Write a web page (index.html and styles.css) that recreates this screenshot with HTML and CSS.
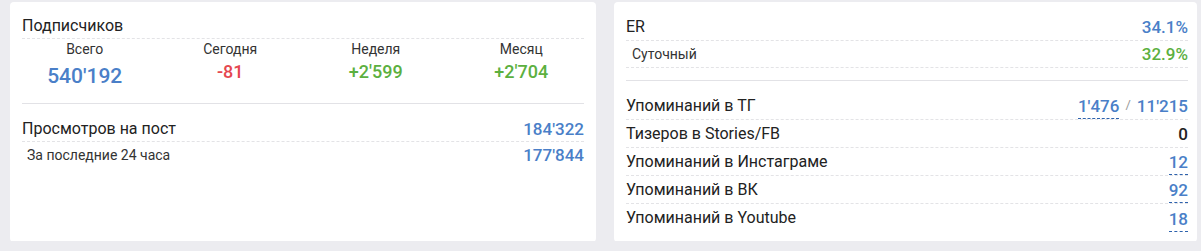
FILE: index.html
```html
<!DOCTYPE html>
<html lang="ru">
<head>
<meta charset="utf-8">
<title>Статистика канала</title>
<link rel="stylesheet" href="styles.css">
</head>
<body>
<div class="board">
  <section class="card card-left">
    <div class="title-row">Подписчиков</div>
    <div class="stats">
      <div class="stat">
        <div class="stat-label">Всего</div>
        <div class="stat-value big blue">540'192</div>
      </div>
      <div class="stat">
        <div class="stat-label">Сегодня</div>
        <div class="stat-value red">-81</div>
      </div>
      <div class="stat">
        <div class="stat-label">Неделя</div>
        <div class="stat-value green">+2'599</div>
      </div>
      <div class="stat">
        <div class="stat-label">Месяц</div>
        <div class="stat-value green">+2'704</div>
      </div>
    </div>
    <div class="section section-views">
      <div class="row row-main">
        <span class="label">Просмотров на пост</span>
        <span class="val blue">184'322</span>
      </div>
      <div class="row row-sub no-border">
        <span class="label small">За последние 24 часа</span>
        <span class="val blue">177'844</span>
      </div>
    </div>
  </section>

  <section class="card card-right">
    <div class="row row-er">
      <span class="label">ER</span>
      <span class="val blue">34.1%</span>
    </div>
    <div class="row row-er">
      <span class="label small">Суточный</span>
      <span class="val green">32.9%</span>
    </div>
    <div class="section section-mentions">
      <div class="row row-m">
        <span class="label">Упоминаний в ТГ</span>
        <span class="vals"><span class="val blue link">1'476</span><span class="slash">/</span><span class="val blue">11'215</span></span>
      </div>
      <div class="row row-m">
        <span class="label">Тизеров в Stories/FB</span>
        <span class="vals"><span class="val dark">0</span></span>
      </div>
      <div class="row row-m">
        <span class="label">Упоминаний в Инстаграме</span>
        <span class="vals"><span class="val blue link">12</span></span>
      </div>
      <div class="row row-m">
        <span class="label">Упоминаний в ВК</span>
        <span class="vals"><span class="val blue link">92</span></span>
      </div>
      <div class="row row-m no-border">
        <span class="label">Упоминаний в Youtube</span>
        <span class="vals"><span class="val blue link">18</span></span>
      </div>
    </div>
  </section>
</div>
</body>
</html>
```

FILE: styles.css
```css
* { box-sizing: border-box; }

html, body {
  margin: 0;
  padding: 0;
}

body {
  background: #ececf0;
  font-family: Roboto, "Noto Sans", "Liberation Sans", sans-serif;
  color: #222;
  padding: 2px 4px 0 10px;
}

.board {
  display: grid;
  grid-template-columns: 586px 583px;
  column-gap: 18px;
  height: 239px;
}

.card {
  background: #fff;
  border-radius: 4px;
  padding: 12px 12px 10px 12px;
  display: flex;
  flex-direction: column;
}

.card-right {
  padding-right: 9px;
}

.title-row {
  font-size: 16px;
  line-height: 24px;
  border-bottom: 1px dashed #e3e3e6;
}

.stats {
  display: grid;
  grid-template-columns: repeat(4, 1fr);
  margin: 0 -10px;
  padding-top: 1px;
  text-align: center;
}

.stat-label {
  font-size: 14px;
  line-height: 18px;
  color: #333;
}

.stat-value {
  font-size: 18px;
  line-height: 28px;
  font-weight: 500;
}

.stat-value.big {
  font-size: 21px;
  line-height: 36px;
}

.section {
  border-top: 1px solid #e2e2e6;
}

.section-views {
  margin-top: 9px;
  padding-top: 13px;
}

.section-mentions {
  margin-top: 12px;
  padding-top: 11px;
}

.row {
  display: flex;
  justify-content: space-between;
  align-items: center;
  border-bottom: 1px dashed #e3e3e6;
}

.row.no-border {
  border-bottom: none;
}

.row-main { height: 25px; }
.row-sub { height: 26px; }
.row-er { height: 27px; }
.row-m { height: 28px; }

.label {
  font-size: 16px;
  line-height: 24px;
}

.label.small {
  font-size: 14px;
  padding-left: 5px;
  color: #333;
}

.row-er .label.small {
  padding-left: 6px;
}

.val {
  font-size: 17px;
  line-height: 24px;
  font-weight: 500;
}

.vals {
  display: flex;
  align-items: flex-end;
  align-self: flex-end;
}

.vals .val {
  display: inline-block;
  line-height: 20px;
  padding-bottom: 2px;
  border-bottom: 1px solid transparent;
}

.vals .val.link {
  border-bottom: 1px dashed #2d62ad;
}

.slash {
  font-size: 13px;
  line-height: 20px;
  padding-bottom: 4px;
  color: #9a9a9a;
  padding-left: 6px;
  padding-right: 6px;
}

.blue { color: #4a7fc8; }
.red { color: #e5474f; }
.green { color: #5cb03f; }
.dark { color: #222; }
```
